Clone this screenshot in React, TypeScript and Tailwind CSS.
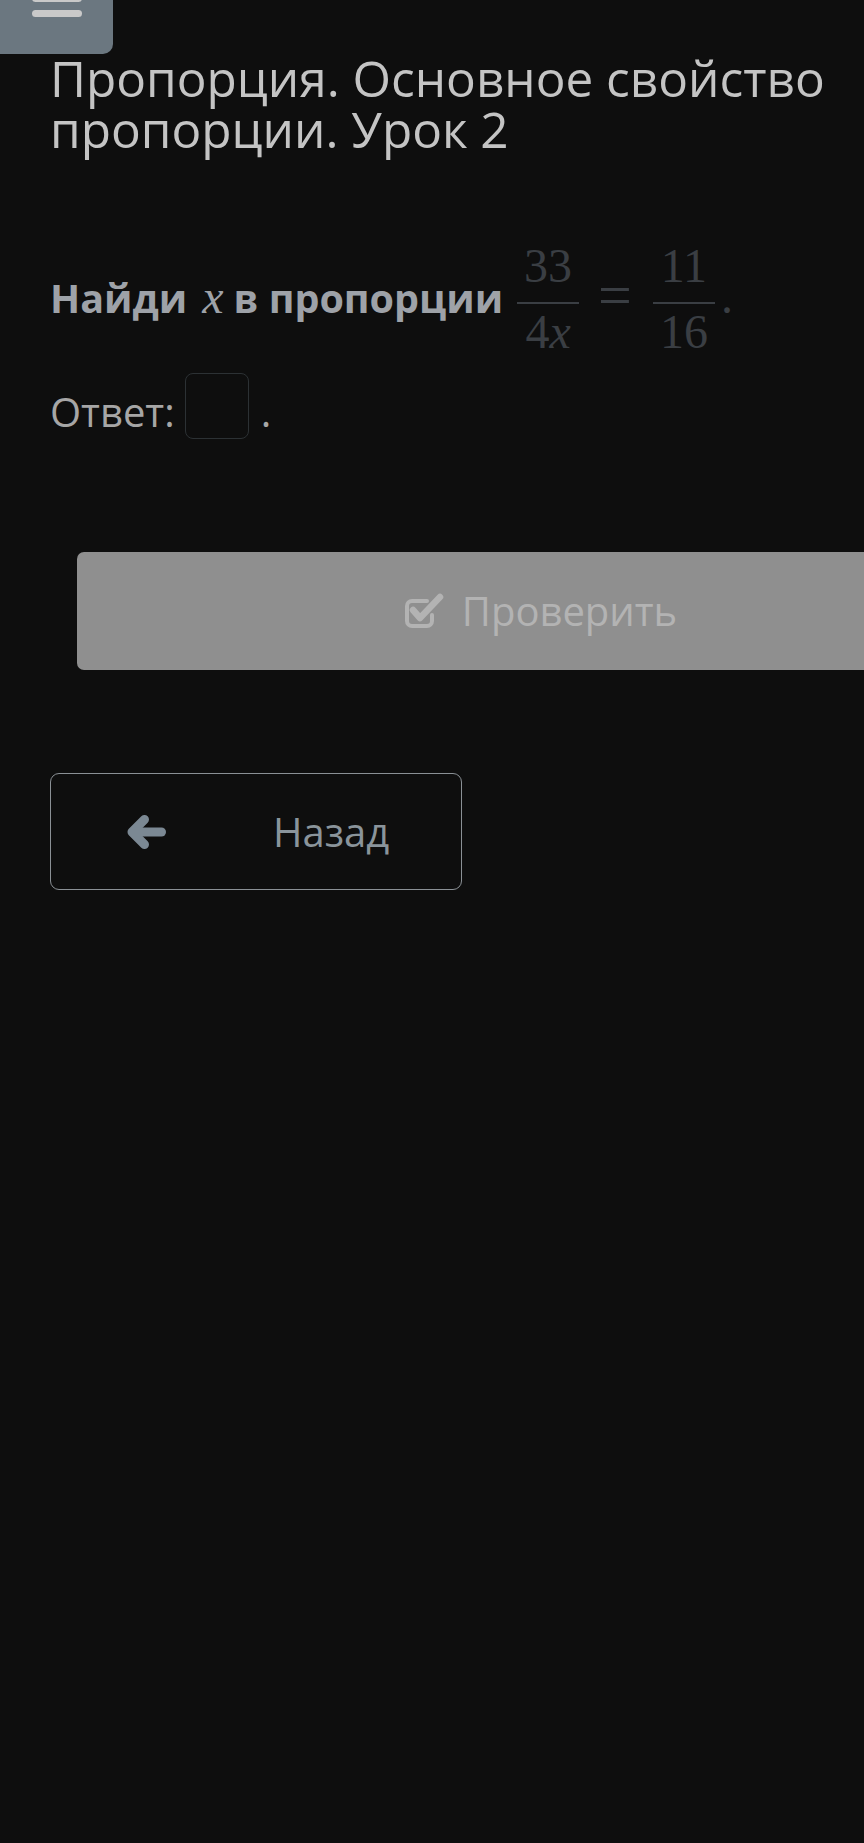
import React from "react";

const sans = { fontFamily: '"Open Sans", "Noto Sans", sans-serif' };
const serif = { fontFamily: '"Liberation Serif", "DejaVu Serif", serif' };

function Frac({ num, den, denNode }: { num: string; den?: string; denNode?: React.ReactNode }) {
  return (
    <div className="flex flex-col items-stretch" style={serif}>
      <div className="h-[40px] px-[7px] text-center text-[48px] leading-[40px]">{num}</div>
      <div className="mt-[16px] h-[2px] bg-[#3a3e43]" />
      <div className="mt-[8px] h-[40px] px-[7px] text-center text-[48px] leading-[40px]">{denNode ?? den}</div>
    </div>
  );
}

function CheckIcon() {
  return (
    <svg width="42" height="36" viewBox="0 0 42 36" fill="none">
      <path d="M24 8 H9 a5 5 0 0 0 -5 5 V28 a5 5 0 0 0 5 5 H24 a5 5 0 0 0 5 -5 V22" stroke="#b3b3b3" strokeWidth="4" strokeLinecap="round" />
      <path d="M10 17 L17 25 L37 4" stroke="#b3b3b3" strokeWidth="6.5" strokeLinecap="round" strokeLinejoin="round" />
    </svg>
  );
}

function ArrowIcon() {
  return (
    <svg width="39" height="34" viewBox="0 0 39 34" fill="none">
      <path d="M17.5 4.5 L5 17 L17.5 29.5" stroke="#7b8893" strokeWidth="9" strokeLinecap="round" strokeLinejoin="round" />
      <path d="M6 17 H34.5" stroke="#7b8893" strokeWidth="9" strokeLinecap="round" />
    </svg>
  );
}

export default function App() {
  return (
    <div className="relative min-h-[1843px] w-full overflow-hidden bg-[#0e0e0e]" style={sans}>
      {/* menu button */}
      <div className="h-[54px] w-[113px] overflow-hidden rounded-br-[10px] bg-[#6b7780]">
        <div className="ml-[32px] mt-[-5px] flex w-[50px] flex-col gap-[8px]">
          <div className="h-[7px] rounded-full bg-[#c9c9c9]" />
          <div className="h-[7px] rounded-full bg-[#c9c9c9]" />
        </div>
      </div>

      <div className="flex flex-col px-[44px]">
        <h1 className="ml-[6px] mr-[-24px] mt-[-1px] text-[49.5px] font-normal leading-[51px] text-[#c4c4c4]">
          Пропорция. Основное свойство пропорции. Урок 2
        </h1>

        {/* question */}
        <div className="ml-[6px] mt-[91px] flex items-start text-[#3a3e43]">
          <span className="mt-[28px] text-[39.5px] font-bold leading-[48px] text-[#9ea2a8]">Найди</span>
          <span className="ml-[15px] mt-[31px] text-[48px] leading-[40px] text-[#9ea2a8]" style={serif}>
            <i>x</i>
          </span>
          <span className="ml-[10px] mt-[28px] text-[39.5px] font-bold leading-[48px] text-[#9ea2a8]">в пропорции</span>
          <div className="ml-[14px]">
            <Frac num="33" denNode={<span>4<i>x</i></span>} />
          </div>
          <span className="ml-[19px] mt-[24px] text-[60px] leading-[50px]" style={serif}>=</span>
          <div className="ml-[21px]">
            <Frac num="11" den="16" />
          </div>
          <span className="ml-[6px] mt-[31px] text-[48px] leading-[40px]" style={serif}>.</span>
        </div>

        {/* answer */}
        <div className="ml-[6px] mt-[21px] flex items-start">
          <span className="mt-[15px] text-[40px] leading-[48px] text-[#a6a6a6]">Ответ:</span>
          <div className="ml-[10px] h-[66px] w-[64px] rounded-[8px] border-[1.5px] border-[#2c3134]" />
          <span className="ml-[12px] mt-[15px] text-[40px] leading-[48px] text-[#a6a6a6]">.</span>
        </div>

        {/* check button */}
        <div className="ml-[33px] mt-[113px] flex h-[118px] w-[926px] shrink-0 items-center justify-center gap-[17px] rounded-[7px] bg-[#8f8f8f]">
          <CheckIcon />
          <span className="text-[40px] leading-[48px] text-[#b3b3b3]">Проверить</span>
        </div>

        {/* back button */}
        <div className="ml-[6px] mt-[103px] flex h-[117px] w-[412px] items-center rounded-[9px] border-[1.5px] border-[#8a9095] pl-[76px]">
          <ArrowIcon />
          <span className="ml-[107px] text-[40px] leading-[48px] text-[#8a949b]">Назад</span>
        </div>
      </div>
    </div>
  );
}
